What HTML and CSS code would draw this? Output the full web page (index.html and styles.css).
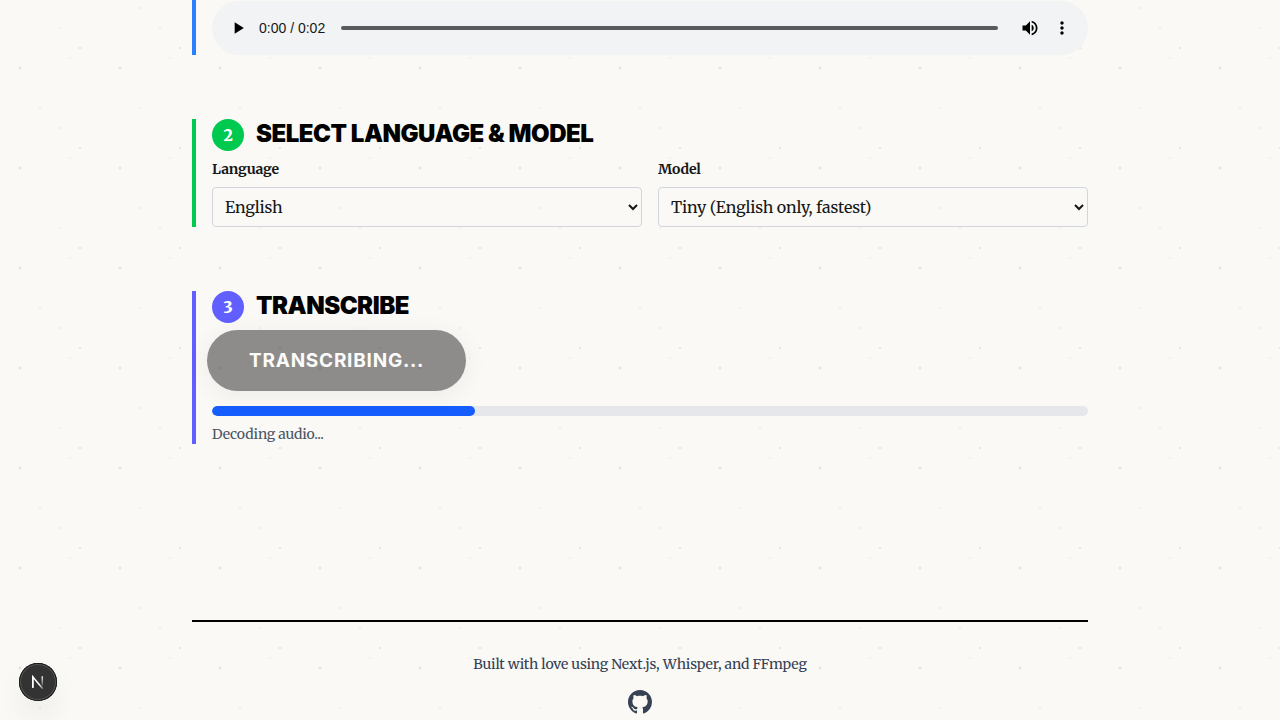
FILE: index.html
```html
<!DOCTYPE html>
<html lang="en">
<head>
<meta charset="utf-8">
<meta name="viewport" content="width=device-width, initial-scale=1">
<title>Whisper Transcriber</title>
<link rel="stylesheet" href="styles.css">
</head>
<body>
<div class="page">
  <main class="steps">
    <section class="step step-upload">
      <div class="player">
        <button class="player-button" type="button" aria-label="Play">
          <svg viewBox="0 0 24 24" width="20" height="20"><path d="M8 5v14l11-7z"/></svg>
        </button>
        <span class="player-time">0:00 / 0:02</span>
        <input class="player-track" type="range" min="0" max="2" value="0" aria-label="Seek">
        <button class="player-button" type="button" aria-label="Mute">
          <svg viewBox="0 0 24 24" width="20" height="20"><path d="M3 9v6h4l5 5V4L7 9H3zm13.500 3c0-1.770-1.020-3.290-2.500-4.030v8.050c1.480-.730 2.500-2.250 2.500-4.020zM14 3.230v2.060c2.890.860 5 3.540 5 6.710s-2.110 5.850-5 6.710v2.060c4.010-.910 7-4.490 7-8.770s-2.990-7.860-7-8.770z"/></svg>
        </button>
        <button class="player-button" type="button" aria-label="More options">
          <svg viewBox="0 0 24 24" width="20" height="20"><path d="M12 8c1.100 0 2-.900 2-2s-.900-2-2-2-2 .900-2 2 .900 2 2 2zm0 2c-1.100 0-2 .900-2 2s.900 2 2 2 2-.900 2-2-.900-2-2-2zm0 6c-1.100 0-2 .900-2 2s.900 2 2 2 2-.900 2-2-.900-2-2-2z"/></svg>
        </button>
      </div>
    </section>

    <section class="step step-options">
      <div class="step-header">
        <span class="step-number">2</span>
        <h2 class="step-title">SELECT LANGUAGE &amp; MODEL</h2>
      </div>
      <div class="fields">
        <div class="field">
          <label class="field-label" for="language">Language</label>
          <select class="field-select" id="language"><option>English</option></select>
        </div>
        <div class="field">
          <label class="field-label" for="model">Model</label>
          <select class="field-select" id="model"><option>Tiny (English only, fastest)</option></select>
        </div>
      </div>
    </section>

    <section class="step step-transcribe">
      <div class="step-header">
        <span class="step-number">3</span>
        <h2 class="step-title">TRANSCRIBE</h2>
      </div>
      <button class="transcribe-button" type="button" disabled>TRANSCRIBING...</button>
      <progress class="progress" id="progress" max="100" value="30" aria-labelledby="status"></progress>
      <p class="status" id="status">Decoding audio...</p>
    </section>
  </main>

  <footer class="footer">
    <p class="footer-text">Built with love using Next.js, Whisper, and FFmpeg</p>
    <a class="footer-link" href="#" aria-label="GitHub">
      <svg viewBox="0 0 24 24" width="24" height="24"><path fill-rule="evenodd" clip-rule="evenodd" d="M12 0C5.370 0 0 5.370 0 12c0 5.310 3.435 9.795 8.205 11.385.600.105.825-.255.825-.570 0-.285-.015-1.230-.015-2.235-3.015.555-3.795-.735-4.035-1.410-.135-.345-.720-1.410-1.230-1.695-.420-.225-1.020-.780-.015-.795.945-.015 1.620.870 1.845 1.230 1.080 1.815 2.805 1.305 3.495.990.105-.780.420-1.305.765-1.605-2.670-.300-5.460-1.335-5.460-5.925 0-1.305.465-2.385 1.230-3.225-.120-.300-.540-1.530.120-3.180 0 0 1.005-.315 3.300 1.230.960-.270 1.980-.405 3-.405s2.040.135 3 .405c2.295-1.560 3.300-1.230 3.300-1.230.660 1.650.240 2.880.120 3.180.765.840 1.230 1.905 1.230 3.225 0 4.605-2.805 5.625-5.475 5.925.435.375.810 1.095.810 2.220 0 1.605-.015 2.895-.015 3.300 0 .315.225.690.825.570A12.020 12.020 0 0 0 24 12c0-6.630-5.370-12-12-12z"/></svg>
    </a>
  </footer>
</div>

<button class="dev-badge" type="button" aria-label="Open developer tools">
  <svg viewBox="0 0 40 40" width="38" height="38" fill="none">
    <defs>
      <linearGradient id="stem" x1="0" y1="13" x2="0" y2="26" gradientUnits="userSpaceOnUse"><stop offset="0" stop-color="#fff"/><stop offset="1" stop-color="#fff" stop-opacity="0"/></linearGradient>
      <linearGradient id="slash" x1="22" y1="22" x2="26" y2="28" gradientUnits="userSpaceOnUse"><stop offset="0" stop-color="#fff"/><stop offset="1" stop-color="#fff" stop-opacity="0.200"/></linearGradient>
    </defs>
    <path d="M14.500 26V14.500L25 27" stroke="url(#slash)" stroke-width="1.600"/>
    <path d="M14.500 26V14" stroke="#fff" stroke-width="1.600"/>
    <path d="M24.500 14V24" stroke="url(#stem)" stroke-width="1.600"/>
  </svg>
</button>
</body>
</html>
```
FILE: styles.css
```css
* {
  box-sizing: border-box;
}

body {
  margin: 0;
  color: #171717;
  font-family: Merriweather, "Liberation Serif", serif;
  font-size: 16px;
  line-height: 24px;
  letter-spacing: -0.01em;
  background-color: #faf9f6;
  background-image:
    radial-gradient(circle at 20px 68px, rgba(0, 0, 0, 0.08) 1px, rgba(0, 0, 0, 0.03) 1px, rgba(0, 0, 0, 0.03) 2px, transparent 2px),
    radial-gradient(circle at 80px 48px, rgba(0, 0, 0, 0.08) 1px, transparent 1px),
    radial-gradient(circle at 40px 8px, rgba(0, 0, 0, 0.04) 1px, transparent 1px),
    radial-gradient(circle at 60px 28px, rgba(0, 0, 0, 0.04) 1px, transparent 1px),
    radial-gradient(circle at 70px 58px, rgba(0, 0, 0, 0.03) 1px, transparent 1px);
  background-size: 100px 100px;
}

h2,
p {
  margin: 0;
}

button {
  border: 0;
  font: inherit;
}

svg {
  display: block;
}

.page {
  max-width: 896px;
  margin: 0 auto;
}

.steps {
  display: flex;
  flex-direction: column;
  gap: 64px;
}

.step {
  padding-left: 16px;
  border-left: 4px solid;
}

.step-upload {
  padding-top: 1px;
  border-color: #2b7fff;
}

.step-options {
  border-color: #00c950;
}

.step-transcribe {
  border-color: #615fff;
}

.player {
  display: flex;
  align-items: center;
  height: 54px;
  padding: 0 10px;
  border-radius: 27px;
  background: #f1f3f4;
  font-family: "Liberation Sans", Arial, sans-serif;
  font-size: 14px;
  letter-spacing: normal;
}

.player-button {
  display: grid;
  place-items: center;
  width: 32px;
  height: 32px;
  padding: 0;
  background: none;
}

.player-time {
  margin: 0 16px 0 5px;
  white-space: nowrap;
}

.player-track {
  flex: 1;
  min-width: 0;
  height: 4px;
  margin: 0 16px 0 0;
  border-radius: 2px;
  background: #5a5a5a;
  appearance: none;
}

.player-track::-webkit-slider-thumb {
  width: 0;
  height: 0;
  appearance: none;
}

.step-header {
  display: flex;
  gap: 12px;
  margin-bottom: 8px;
}

.step-number {
  display: grid;
  place-items: center;
  width: 32px;
  height: 32px;
  border-radius: 50%;
  color: #fff;
  font-size: 16px;
  font-weight: 900;
}

.step-options .step-number {
  background: #00c950;
}

.step-transcribe .step-number {
  background: #615fff;
}

.step-title {
  color: #000;
  font-family: Inter, sans-serif;
  font-size: 24px;
  font-weight: 900;
  line-height: 30px;
  letter-spacing: -0.02em;
}

.fields {
  display: grid;
  grid-template-columns: 1fr 1fr;
  gap: 16px;
}

.field-label {
  display: block;
  margin-bottom: 8px;
  font-size: 14px;
  font-weight: 700;
  line-height: 20px;
}

.field-select {
  display: block;
  width: 100%;
  height: 40px;
  padding: 8px;
  border: 1px solid #d1d5dc;
  border-radius: 4px;
  background: transparent;
  color: inherit;
  font-family: inherit;
  font-size: 16px;
  letter-spacing: inherit;
}

.transcribe-button {
  display: block;
  margin: -1px -5px 15px;
  padding: 16px 42px;
  border-radius: 31px;
  background: #222;
  color: #fff;
  font-family: Inter, sans-serif;
  font-size: 19px;
  font-weight: 700;
  line-height: 29px;
  letter-spacing: 0.04em;
  opacity: 0.5;
  box-shadow: 0 4px 20px rgba(0, 0, 0, 0.1);
}

.progress {
  display: block;
  width: 100%;
  height: 10px;
  margin-bottom: 8px;
  border: 0;
  border-radius: 5px;
  background: #e5e7eb;
  appearance: none;
  overflow: hidden;
}

.progress::-webkit-progress-bar {
  background: #e5e7eb;
}

.progress::-webkit-progress-value {
  border-radius: 5px;
  background: #155dfc;
}

.status {
  color: #4a5565;
  font-size: 14px;
  line-height: 20px;
}

.footer {
  display: flex;
  flex-direction: column;
  align-items: center;
  gap: 16px;
  margin-top: 176px;
  padding-top: 32px;
  border-top: 2px solid #000;
  color: #364153;
}

.footer-text {
  font-size: 14px;
  line-height: 20px;
}

.footer-link {
  color: inherit;
}

.footer-link svg {
  fill: currentColor;
}

.dev-badge {
  position: fixed;
  bottom: 19px;
  left: 19px;
  width: 38px;
  height: 38px;
  padding: 0;
  border-radius: 50%;
  background: #333;
  box-shadow: inset 0 0 0 1px #171717, inset 0 0 0 2px #555, 0 16px 32px -8px rgba(0, 0, 0, 0.16);
}
```
